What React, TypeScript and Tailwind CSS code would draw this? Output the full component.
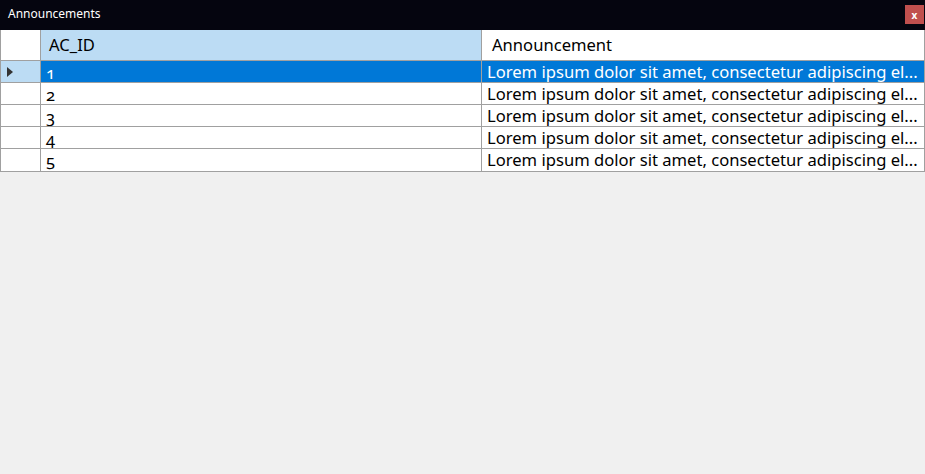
import React from 'react';

const rows = [1, 2, 3, 4, 5];
const text = 'Lorem ipsum dolor sit amet, consectetur adipiscing el...';

export default function App() {
  return (
    <div className="w-[925px] h-[474px] bg-[#f0f0f0] flex flex-col overflow-hidden" style={{ fontFamily: '"Noto Sans", "Open Sans", sans-serif' }}>
      {/* Title bar */}
      <div className="h-[30px] bg-[#05050f] flex items-center justify-between pl-[8px] pr-[1px]">
        <span className="text-[12px] text-white leading-none -mt-[2px]">Announcements</span>
        <button className="w-[19px] h-[19px] bg-[#c0504e] text-white text-[10px] font-bold leading-none flex items-center justify-center -mt-[1px]">
          x
        </button>
      </div>

      {/* Grid */}
      <div className="border border-[#a0a0a0] border-t-0 bg-white text-[16.6px] text-black">
        <div className="flex h-[31px] border-b border-[#a0a0a0]">
          <div className="w-[40px] shrink-0 bg-white border-r border-[#a0a0a0]" />
          <div className="w-[441px] shrink-0 bg-[#bcdcf4] border-r border-[#a0a0a0] pl-[8px] flex items-center pt-[1px]">AC_ID</div>
          <div className="flex-1 bg-white pl-[10px] flex items-center pt-[1px]">Announcement</div>
        </div>
        {rows.map((n, i) => {
          const sel = i === 0;
          return (
            <div key={n} className={`flex h-[22px] ${i < rows.length - 1 ? 'border-b border-[#a0a0a0]' : ''}`}>
              <div className={`w-[40px] shrink-0 border-r border-[#a0a0a0] flex items-center pl-[6px] ${sel ? 'bg-[#bcdcf4]' : 'bg-white'}`}>
                {sel && (
                  <svg width="6" height="10" viewBox="0 0 6 10">
                    <path d="M0 0 L6 5 L0 10 Z" fill="#333" />
                  </svg>
                )}
              </div>
              <div className={`w-[441px] shrink-0 border-r border-[#a0a0a0] overflow-hidden pl-[5px] pt-[1px] leading-[22px] oldstyle-nums ${sel ? 'bg-[#0078d7] text-white' : ''}`}>
                {n}
              </div>
              <div className={`flex-1 overflow-hidden whitespace-nowrap pl-[5px] leading-[22px] ${sel ? 'bg-[#0078d7] text-white' : ''}`}>
                {text}
              </div>
            </div>
          );
        })}
      </div>
    </div>
  );
}
